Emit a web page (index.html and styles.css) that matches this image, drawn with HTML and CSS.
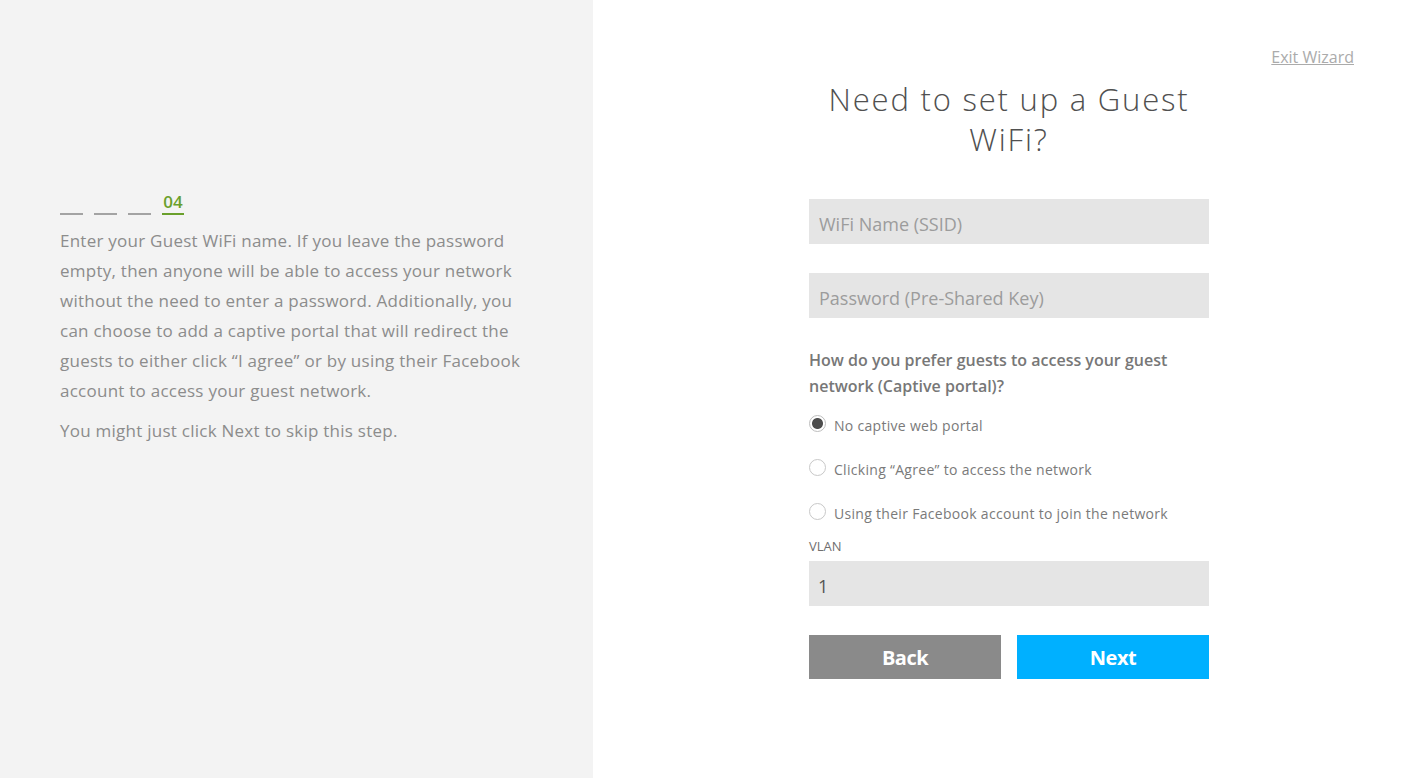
FILE: index.html
```html
<!DOCTYPE html>
<html lang="en">
<head>
    <meta charset="UTF-8">
    <meta name="viewport" content="width=device-width, initial-scale=1.0">
    <title>Guest WiFi Setup</title>
    <link rel="stylesheet" href="styles.css">
</head>
<body>
    <div class="page">
        <aside class="intro">
            <div class="steps">
                <span class="step"></span>
                <span class="step"></span>
                <span class="step"></span>
                <span class="step current">04</span>
            </div>
            <p>Enter your Guest WiFi name. If you leave the password empty, then anyone will be able to access your network without the need to enter a password. Additionally, you can choose to add a captive portal that will redirect the guests to either click &ldquo;I agree&rdquo; or by using their Facebook account to access your guest network.</p>
            <p>You might just click Next to skip this step.</p>
        </aside>

        <main class="wizard">
            <div class="top-bar">
                <a href="#" class="exit">Exit Wizard</a>
            </div>
            <form class="guest-form" id="guestForm">
                <h1>Need to set up a Guest WiFi?</h1>

                <input type="text" class="field" id="ssid" name="ssid" placeholder="WiFi Name (SSID)">
                <input type="password" class="field" id="psk" name="psk" placeholder="Password (Pre-Shared Key)">

                <p class="question">How do you prefer guests to access your guest network (Captive portal)?</p>

                <label class="option">
                    <input type="radio" name="portal" value="none" checked>
                    <span>No captive web portal</span>
                </label>
                <label class="option">
                    <input type="radio" name="portal" value="agree">
                    <span>Clicking &ldquo;Agree&rdquo; to access the network</span>
                </label>
                <label class="option">
                    <input type="radio" name="portal" value="facebook">
                    <span>Using their Facebook account to join the network</span>
                </label>

                <label class="small-label" for="vlan">VLAN</label>
                <input type="text" class="field vlan" id="vlan" name="vlan" value="1">

                <div class="buttons">
                    <button type="button" class="btn back">Back</button>
                    <button type="submit" class="btn next">Next</button>
                </div>
            </form>
        </main>
    </div>
</body>
</html>
```

FILE: styles.css
```css
* {
    box-sizing: border-box;
}
html, body {
    margin: 0;
    height: 100%;
}
body {
    font-family: 'Open Sans', 'DejaVu Sans', sans-serif;
    color: #8a8a8a;
    background-color: #ffffff;
}
.page {
    display: flex;
    min-height: 100vh;
}

/* left side */
.intro {
    width: 593px;
    flex-shrink: 0;
    background-color: #f3f3f3;
    padding: 192px 0 0 60px;
}
.steps {
    display: flex;
    gap: 11px;
    height: 23px;
    margin-bottom: 11px;
}
.step {
    width: 23px;
    height: 23px;
    border-bottom: 2px solid #a3a3a3;
}
.step.current {
    width: 22px;
    color: #6aa02c;
    border-bottom-color: #6aa02c;
    font-size: 17px;
    font-weight: 600;
    line-height: 20px;
    text-align: center;
}
.intro p {
    width: 482px;
    margin: 0 0 10px;
    font-size: 17px;
    line-height: 30px;
    letter-spacing: 0.25px;
    color: #8c8c8c;
}

/* right side */
.wizard {
    flex: 1;
    padding-top: 46px;
}
.top-bar {
    display: flex;
    justify-content: flex-end;
    padding-right: 66px;
}
.exit {
    font-size: 16px;
    line-height: 22px;
    color: #ababab;
    text-decoration: underline;
}
.guest-form {
    width: 400px;
    margin: 11px 0 0 216px;
    display: flex;
    flex-direction: column;
}
h1 {
    margin: 0 0 40px;
    font-size: 31px;
    font-weight: 300;
    line-height: 40px;
    letter-spacing: 1.8px;
    text-align: center;
    color: #505050;
}
.field {
    width: 100%;
    height: 45px;
    padding: 4px 10px 0;
    margin-bottom: 29px;
    border: none;
    background-color: #e5e5e5;
    font-family: inherit;
    font-size: 18px;
    color: #555555;
    outline: none;
}
.field::placeholder {
    color: #9c9c9c;
}
.question {
    margin: 0 0 2px;
    font-size: 16px;
    font-weight: 600;
    line-height: 26px;
    color: #777777;
}
.option {
    display: flex;
    align-items: center;
    height: 44px;
    font-size: 14px;
    letter-spacing: 0.3px;
    color: #7a7a7a;
    cursor: pointer;
}
.option span {
    padding-top: 5px;
}
.option input {
    appearance: none;
    width: 17px;
    height: 17px;
    margin: 0 8px 0 0;
    border: 1px solid #c8c8c8;
    border-radius: 50%;
    background-color: #ffffff;
}
.option input:checked {
    border-color: #bdbdbd;
    background: radial-gradient(circle, #4d4d4d 0, #4d4d4d 5px, #ffffff 6px);
}
.small-label {
    margin-top: 5px;
    font-size: 13px;
    line-height: 16px;
    color: #6f6f6f;
}
.vlan {
    margin-top: 7px;
    padding-left: 9px;
    color: #555555;
}
.buttons {
    display: flex;
    gap: 16px;
}
.btn {
    flex: 1;
    height: 44px;
    border: none;
    font-family: inherit;
    font-size: 20px;
    font-weight: 700;
    letter-spacing: -0.5px;
    color: #ffffff;
    cursor: pointer;
}
.btn.back {
    background-color: #8a8a8a;
}
.btn.next {
    background-color: #00b0ff;
}
```
